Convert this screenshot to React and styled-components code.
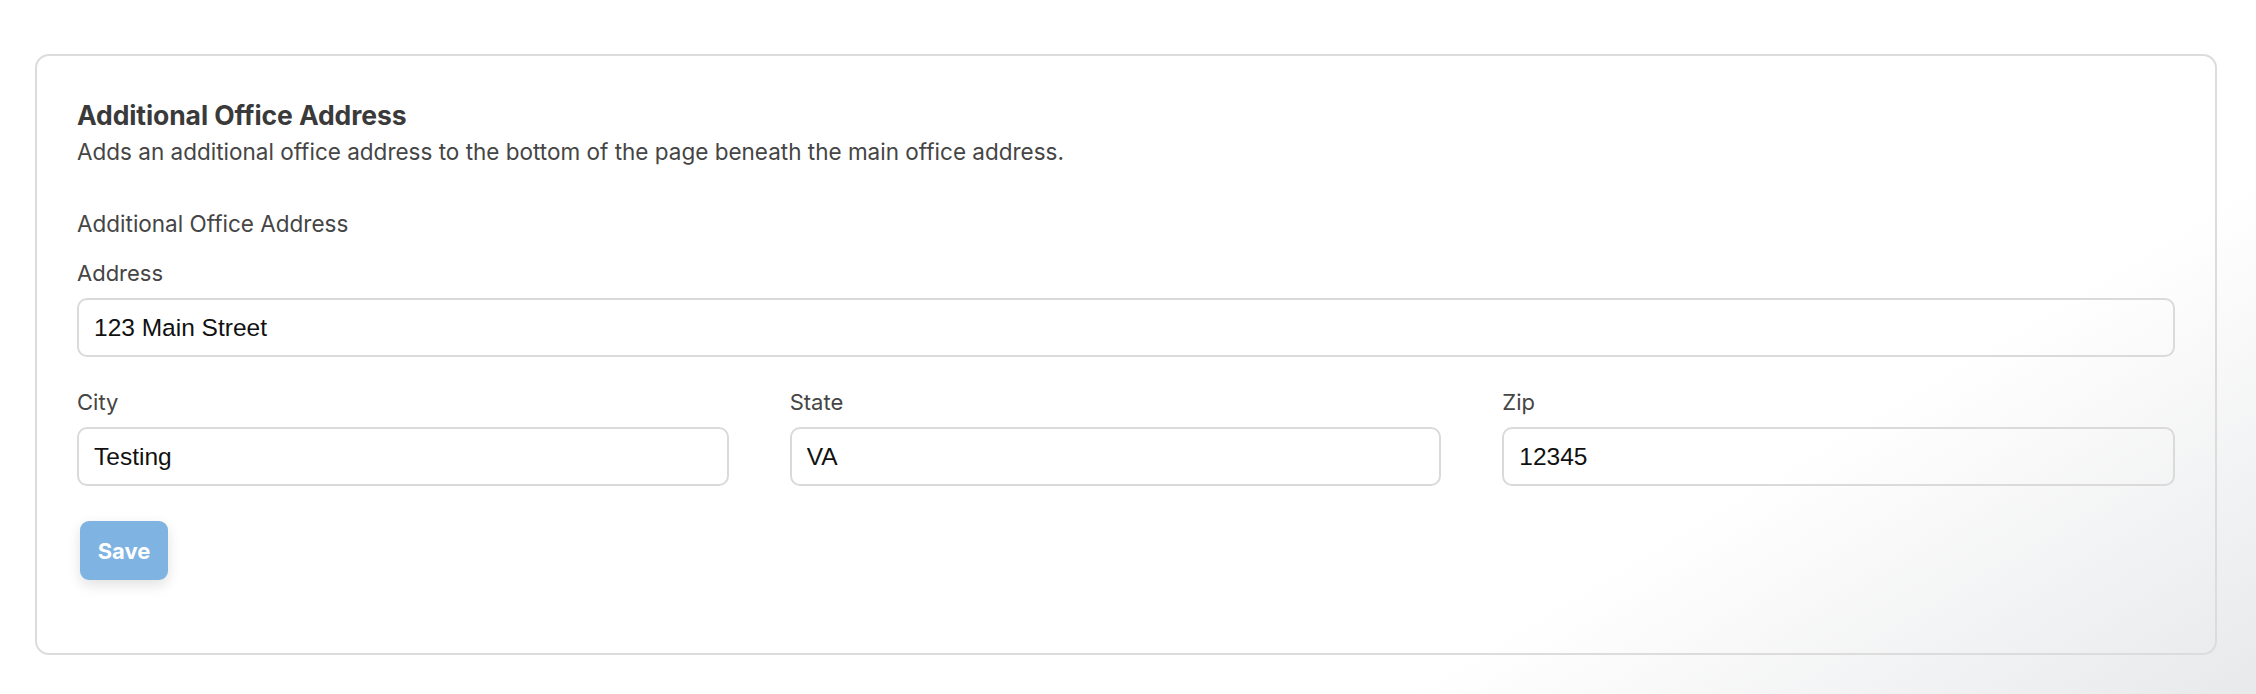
import React from "react";
import styled, { createGlobalStyle } from "styled-components";

const Global = createGlobalStyle`
  html, body { margin: 0; padding: 0; height: 100%; }
  body {
    background: linear-gradient(149deg, #ffffff 75%, #e8e9eb 100%);
    font-family: Inter, "Noto Sans", sans-serif;
  }
  #root { height: 100%; }
`;

const Page = styled.div`
  box-sizing: border-box;
  min-height: 100%;
  padding: 54px 39px 0 35px;
`;

const Card = styled.section`
  box-sizing: border-box;
  height: 601px;
  border: 2px solid #dcdcdc;
  border-radius: 14px;
  padding: 45px 40px 40px 40px;
  display: flex;
  flex-direction: column;
`;

const Title = styled.h2`
  margin: 0;
  font-size: 26.5px;
  line-height: 28px;
  font-weight: 700;
  color: #3a3a3a;
  letter-spacing: -0.1px;
`;

const Description = styled.p`
  margin: 9px 0 0;
  font-size: 22.5px;
  line-height: 28px;
  color: #454545;
`;

const Subheading = styled.div`
  margin-top: 44px;
  font-size: 22.5px;
  line-height: 28px;
  color: #454545;
`;

const Field = styled.div`
  display: flex;
  flex-direction: column;
  min-width: 0;
  margin-top: ${(p) => p.$top || 0}px;
`;

const Label = styled.label`
  font-size: 22px;
  line-height: 28px;
  color: #454545;
  margin-bottom: 11px;
`;

const Input = styled.input`
  box-sizing: border-box;
  width: 100%;
  height: 59px;
  border: 2px solid #dadada;
  border-radius: 10px;
  background: transparent;
  padding: 0 15px;
  font-family: "Liberation Sans", Arial, sans-serif;
  font-size: 24.5px;
  color: #111;
  outline: none;
`;

const Row = styled.div`
  display: grid;
  grid-template-columns: 652fr 652fr 673fr;
  column-gap: 61px;
  margin-top: 31px;
`;

const SaveButton = styled.button`
  align-self: flex-start;
  margin: 35px 0 0 3px;
  height: 59px;
  width: 88px;
  border: none;
  border-radius: 9px;
  background: #7eb3e2;
  color: #fff;
  font-family: Inter, "Noto Sans", sans-serif;
  font-weight: 700;
  font-size: 22px;
  box-shadow: 0 5px 14px rgba(0, 0, 0, 0.12);
  cursor: default;
`;

export default function App() {
  return (
    <>
      <Global />
      <Page>
        <Card>
          <Title>Additional Office Address</Title>
          <Description>
            Adds an additional office address to the bottom of the page beneath the main office address.
          </Description>
          <Subheading>Additional Office Address</Subheading>
          <Field $top={21}>
            <Label>Address</Label>
            <Input defaultValue="123 Main Street" />
          </Field>
          <Row>
            <Field>
              <Label>City</Label>
              <Input defaultValue="Testing" />
            </Field>
            <Field>
              <Label>State</Label>
              <Input defaultValue="VA" />
            </Field>
            <Field>
              <Label>Zip</Label>
              <Input defaultValue="12345" />
            </Field>
          </Row>
          <SaveButton disabled>Save</SaveButton>
        </Card>
      </Page>
    </>
  );
}
